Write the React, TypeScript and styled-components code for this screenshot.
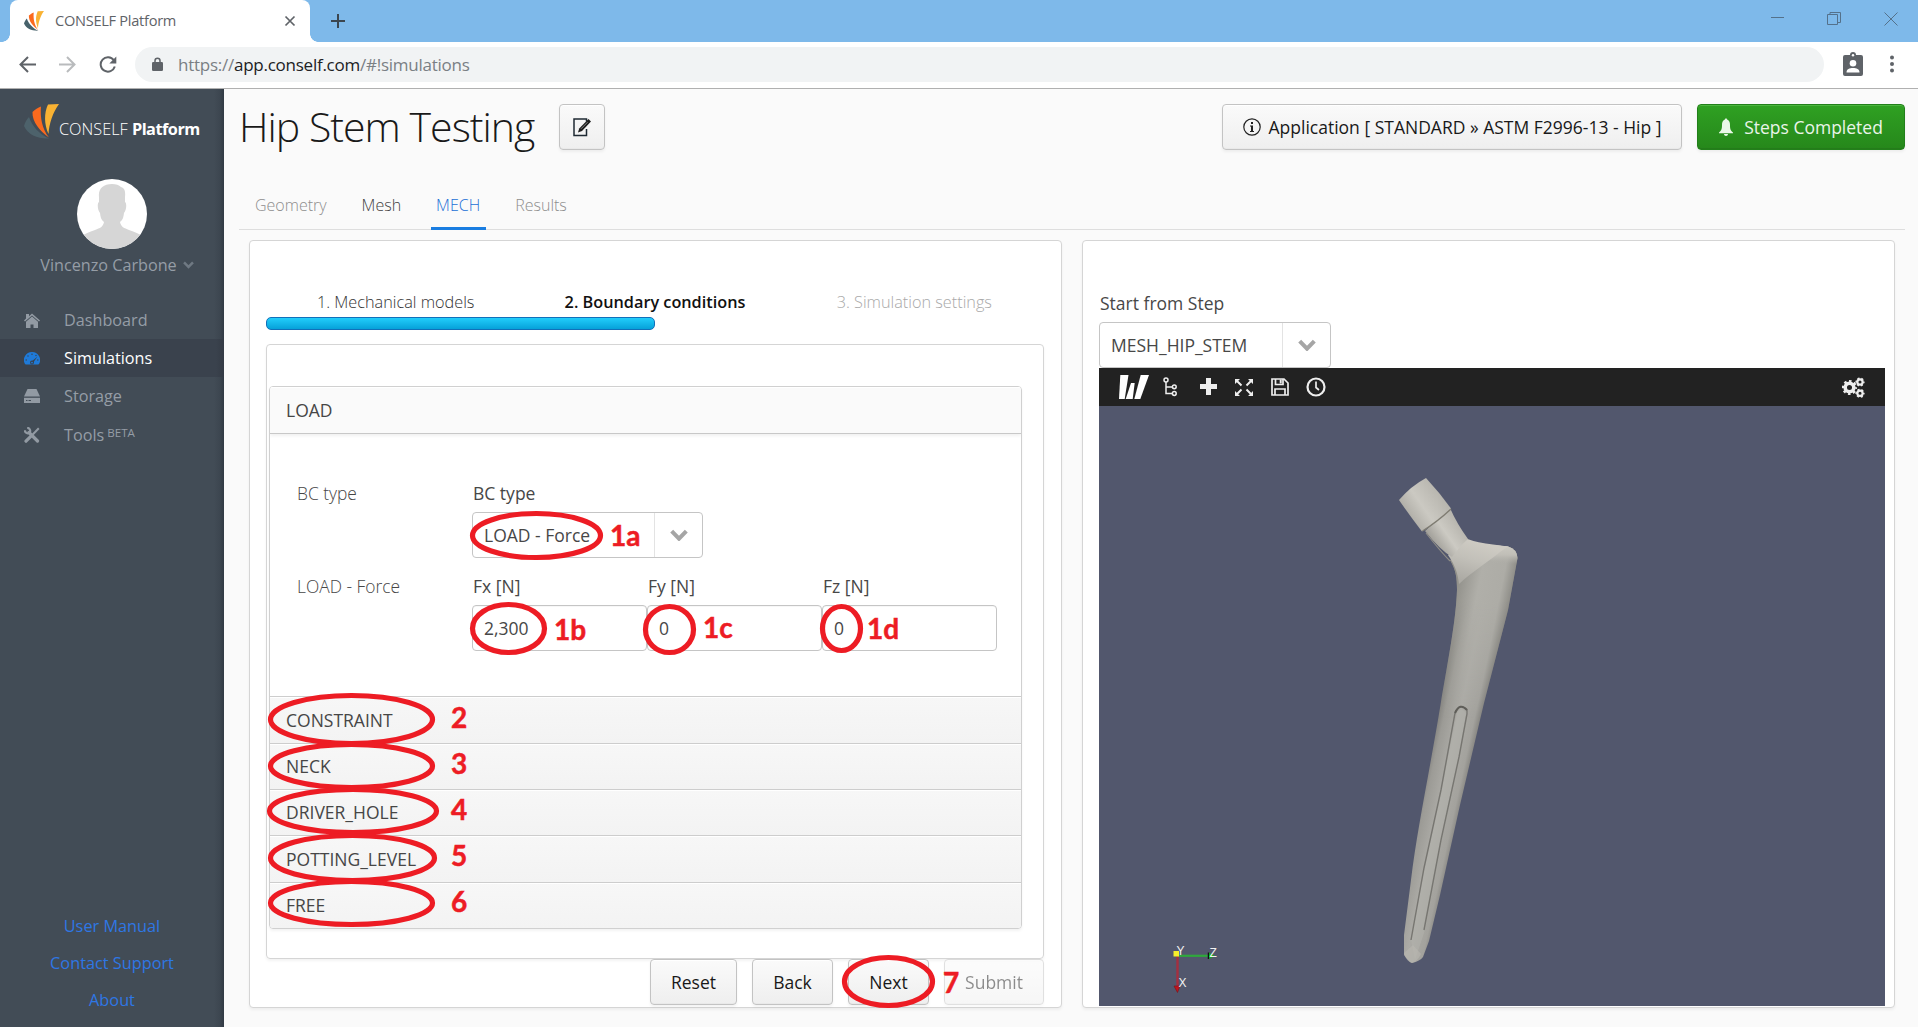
import React from "react";
import styled, { createGlobalStyle, css } from "styled-components";

const GlobalStyle = createGlobalStyle`
  * { box-sizing: border-box; }
  html, body { margin: 0; padding: 0; overflow: hidden; }
  body { font-family: "Open Sans", "Noto Sans", sans-serif; background: #fafafa; color: #474747; }
  svg { display: block; flex: none; }
`;

const Window = styled.div`
  position: relative;
  width: 1918px;
  height: 1027px;
  display: flex;
  flex-direction: column;
  overflow: hidden;
`;

/* ---------- browser frame ---------- */

const TabStrip = styled.div`
  height: 42px;
  flex: none;
  display: flex;
  background: #7eb9ea;
  padding-left: 10px;
`;

const BrowserTab = styled.div`
  position: relative;
  width: 300px;
  background: #fff;
  border-radius: 8px 8px 0 0;
  display: flex;
  align-items: center;
  padding: 0 14px 0 14px;
  font-size: 14.6px;
  letter-spacing: -0.28px;
  color: #5f6368;
  &::before, &::after {
    content: "";
    position: absolute;
    bottom: 0;
    width: 8px;
    height: 8px;
  }
  &::before { left: -8px; background: radial-gradient(circle at 0 0, transparent 7.5px, #fff 8px); }
  &::after { right: -8px; background: radial-gradient(circle at 100% 0, transparent 7.5px, #fff 8px); }
`;

const TabTitle = styled.span`
  flex: 1;
  margin-left: 11px;
  line-height: 20px;
  margin-top: -2px;
`;

const NewTab = styled.div`
  margin: 13px 0 0 20px;
`;

const WindowControls = styled.div`
  margin-left: auto;
  display: flex;
  align-items: flex-start;
  gap: 43px;
  padding: 12px 20px 0 0;
`;

const AddressRow = styled.div`
  height: 47px;
  flex: none;
  display: flex;
  align-items: center;
  background: #fff;
  border-bottom: 1px solid #b0b0b0;
  padding: 0 20px 5px 19px;
`;

const NavIcons = styled.div`
  display: flex;
  gap: 23px;
  width: 116px;
  margin-top: 3px;
`;

const AddressBar = styled.div`
  flex: 1;
  height: 35px;
  border-radius: 18px;
  background: #f1f3f4;
  display: flex;
  align-items: center;
  padding-left: 17px;
  margin-top: 3px;
  font-size: 17px;
  letter-spacing: -0.25px;
  color: #7a7f84;
`;

const Url = styled.span`
  margin-left: 15px;
  b { font-weight: 400; color: #202124; }
`;

const ChromeActions = styled.div`
  display: flex;
  align-items: center;
  gap: 23px;
  margin: 3px 0 0 19px;
`;

/* ---------- sidebar ---------- */

const Page = styled.div`
  flex: 1;
  display: flex;
  min-height: 0;
`;

const Sidebar = styled.aside`
  width: 224px;
  flex: none;
  display: flex;
  flex-direction: column;
  background: linear-gradient(to left, rgba(44, 52, 62, 0.75), rgba(44, 52, 62, 0.25) 4px, transparent 10px), #424c56;
  color: #959da6;
  font-size: 16.2px;
`;

const Brand = styled.div`
  height: 50px;
  margin-top: 15px;
  padding-left: 24px;
  display: flex;
  color: #fff;
`;

const BrandText = styled.div`
  margin-top: 13px;
  font-size: 16.3px;
  line-height: 24px;
  font-weight: 300;
  white-space: nowrap;
  b { font-weight: 700; letter-spacing: -0.5px; }
`;

const User = styled.div`
  margin-top: 25px;
  display: flex;
  flex-direction: column;
  align-items: center;
`;

const Avatar = styled.div`
  width: 70px;
  height: 70px;
  border-radius: 50%;
  overflow: hidden;
  background: #fff;
`;

const UserName = styled.div`
  display: flex;
  align-items: center;
  gap: 6px;
  margin: 4px 0 0 10px;
  line-height: 24px;
`;

const Menu = styled.nav`
  margin-top: 24px;
`;

const MenuItem = styled.div<{ $active?: boolean }>`
  height: 38px;
  display: flex;
  align-items: center;
  padding-left: 24px;
  gap: 24px;
  color: ${p => (p.$active ? "#fff" : "#959da6")};
  background: ${p => (p.$active ? "linear-gradient(to left, #343b45, #3a424d 8px)" : "none")};
  svg { color: ${p => (p.$active ? "#1f7ad8" : "#929aa3")}; }
  &:last-child { padding-top: 1px; }
  sup { font-size: 11.6px; line-height: 0; vertical-align: 4px; }
`;

const Links = styled.div`
  margin-top: auto;
  padding-bottom: 8px;
  display: flex;
  flex-direction: column;
  align-items: center;
`;

const FooterLink = styled.a`
  line-height: 37px;
  font-size: 16.3px;
  color: #2e77e5;
`;

/* ---------- content ---------- */

const Content = styled.main`
  flex: 1;
  display: flex;
  flex-direction: column;
  padding: 15px 13px 0 15px;
`;

const TitleRow = styled.header`
  height: 46px;
  display: flex;
  align-items: center;
`;

const Title = styled.h1`
  margin: 0 24px 0 0;
  width: 296px;
  font-size: 41px;
  line-height: 44px;
  padding-bottom: 2px;
  font-weight: 300;
  letter-spacing: -0.97px;
  white-space: nowrap;
  color: #191919;
`;

const Button = styled.button<{ $width?: number; $tone?: "green"; $faded?: boolean }>`
  height: 46px;
  width: ${p => (p.$width ? `${p.$width}px` : "auto")};
  flex: none;
  padding: 0;
  display: flex;
  align-items: center;
  justify-content: center;
  border: 1px solid #c3c3c3;
  border-radius: 4px;
  font: 400 17.5px "Open Sans", sans-serif;
  white-space: nowrap;
  color: #191919;
  background: linear-gradient(#fafafa 2%, #efefef 98%);
  box-shadow: inset 0 1px 0 #fff, inset 0 -1px 0 #e9e9e9, 0 2px 3px rgba(0, 0, 0, 0.05);
  ${p => p.$tone === "green" && css`
    color: #eaf4e9;
    border-color: #22801a;
    background: linear-gradient(#2fa022 2%, #26881b 98%);
    box-shadow: inset 0 1px 0 #4cb53f, inset 0 -1px 0 #247c1a, 0 2px 3px rgba(0, 0, 0, 0.05);
  `}
  ${p => p.$faded && css`opacity: 0.5;`}
`;

const ButtonIcon = styled.span<{ $gap: number }>`
  margin-right: ${p => p.$gap}px;
`;

const HeaderActions = styled.div`
  margin-left: auto;
  display: flex;
  gap: 15px;
`;

const Tabs = styled.div`
  height: 80px;
  border-bottom: 1px solid #dedede;
  display: flex;
  align-items: flex-end;
  padding-left: 10.5px;
  gap: 24px;
`;

const TabItem = styled.div<{ $state?: "active" | "muted" }>`
  height: 42px;
  margin-bottom: -1px;
  padding: 0 5.5px;
  font-size: 16px;
  line-height: 35px;
  font-weight: 300;
  color: ${p => (p.$state === "active" ? "#1a6fd6" : p.$state === "muted" ? "#8d8d8d" : "#3f3f3f")};
  border-bottom: 3px solid ${p => (p.$state === "active" ? "#197de1" : "transparent")};
`;

const Panels = styled.div`
  display: flex;
  gap: 20px;
  padding: 10px 10px 0 10px;
`;

const Panel = styled.section<{ $width: number }>`
  width: ${p => p.$width}px;
  height: 768px;
  flex: none;
  background: #fff;
  border: 1px solid #d5d5d5;
  border-radius: 4px;
  box-shadow: 0 2px 3px rgba(0, 0, 0, 0.05);
  padding: 0 17px 0 16px;
`;

const Steps = styled.div`
  margin-top: 49px;
  display: grid;
  grid-template-columns: repeat(3, 1fr);
  text-align: center;
  font-size: 16.25px;
  line-height: 24px;
`;

const Step = styled.span<{ $state: "done" | "current" | "next" }>`
  font-weight: ${p => (p.$state === "current" ? 600 : 300)};
  color: ${p => ({ done: "#333", current: "#111", next: "#a9a9a9" })[p.$state]};
`;

const Progress = styled.div`
  width: 389px;
  height: 13px;
  margin-top: 3px;
  border: 1px solid #1170ba;
  border-radius: 5px;
  background: linear-gradient(#22cdfb, #06a1d9);
`;

const Form = styled.div`
  margin-top: 14px;
  height: 615px;
  border: 1px solid #d5d5d5;
  border-radius: 4px;
  box-shadow: 0 2px 3px rgba(0, 0, 0, 0.05);
  padding: 41px 21px 0 2px;
`;

const Accordion = styled.div`
  height: 543px;
  border: 1px solid #d0d0d0;
  border-radius: 4px;
  box-shadow: 0 2px 3px rgba(0, 0, 0, 0.05);
  overflow: hidden;
`;

const AccordionHead = styled.div<{ $open?: boolean; $height: number }>`
  height: ${p => p.$height}px;
  padding: 0 0 1px 16px;
  display: flex;
  align-items: center;
  font-size: 17.5px;
  color: #464646;
  background: ${p => (p.$open ? "#fafafa" : "linear-gradient(#f7f7f7, #f3f3f3)")};
  ${p => p.$open
    ? css`border-bottom: 1px solid #c8c8c8; box-shadow: inset 0 1px 0 #fff, 0 2px 3px rgba(0, 0, 0, 0.06);`
    : css`border-top: 1px solid #cdcdcd; box-shadow: inset 0 1px 0 #fff;`}
`;

const AccordionBody = styled.div`
  height: 262px;
  padding: 47px 0 0 27px;
  display: flex;
  flex-direction: column;
  gap: 16px;
`;

const FormRow = styled.div`
  display: grid;
  grid-template-columns: 175px repeat(3, 175px);
`;

const RowLabel = styled.span`
  font-size: 17.4px;
  line-height: 24px;
  font-weight: 300;
  color: #464646;
`;

const Field = styled.div`
  display: flex;
  flex-direction: column;
`;

const Caption = styled.label`
  height: 24px;
  margin-bottom: 7px;
  font-size: 17.5px;
  line-height: 24px;
  padding-left: 1px;
`;

const Input = styled.div`
  height: 46px;
  border: 1px solid #c5c5c5;
  border-radius: 4px;
  background: #fff;
  box-shadow: inset 0 1px 0 #f7f7f7;
  padding-left: 11px;
  font-size: 17.5px;
  line-height: 44px;
`;

const Select = styled.div<{ $width: number; $arrow: number }>`
  width: ${p => p.$width}px;
  height: 46px;
  border: 1px solid #c5c5c5;
  border-radius: 4px;
  background: #fff;
  display: grid;
  grid-template-columns: 1fr ${p => p.$arrow}px;
  line-height: 44px;
  font-size: 17.5px;
  padding-left: 11px;
  span { white-space: nowrap; }
`;

const SelectArrow = styled.div`
  border-left: 1px solid #e3e3e3;
  display: flex;
  align-items: center;
  justify-content: center;
`;

const Actions = styled.div`
  display: flex;
  justify-content: flex-end;
  gap: 15px;
`;

const ViewerField = styled(Field)`
  padding-top: 50px;
`;

const ViewerBar = styled.div`
  width: 786px;
  height: 38px;
  background: #222;
  color: #eee;
  display: flex;
  align-items: center;
  padding: 0 20px 0 20px;
`;

const ViewerTools = styled.div`
  display: flex;
  align-items: center;
  flex: 1;
  gap: 17px;
  svg:nth-child(2) { margin-left: -3px; }
  svg:nth-child(3) { margin-left: 6px; }
`;

/* ---------- annotations laid over the page ---------- */

const Overlay = styled.svg`
  position: absolute;
  inset: 0;
`;

const Mark = styled.span<{ $x: number; $base: number }>`
  position: absolute;
  left: ${p => p.$x}px;
  top: ${p => p.$base - 28}px;
  font: 700 28px/34px Lato, sans-serif;
  -webkit-text-stroke: 0.5px #ed1c24;
  color: #ed1c24;
`;

const ellipses: [number, number, number, number][] = [
  [470, 511, 603, 560],
  [470, 602, 547, 655],
  [643, 604, 696, 655],
  [820, 604, 863, 653],
  [268, 693, 435, 746],
  [268, 742, 435, 790],
  [267, 787, 439, 835],
  [268, 833, 437, 883],
  [268, 879, 435, 927],
  [842, 955, 935, 1008],
];

const marks: [string, number, number][] = [
  ["1a", 610, 546],
  ["1b", 554, 640],
  ["1c", 703, 638],
  ["1d", 867, 639],
  ["2", 451, 728],
  ["3", 451, 774],
  ["4", 451, 820],
  ["5", 451, 866],
  ["6", 451, 912],
  ["7", 943, 993],
];

const LogoMark = ({ size, slate }: { size: number; slate: string }) => (
  <svg width={size} height={size} viewBox="0 0 35 35">
    <path d="M5 13 C8 22 15 30 25 34.500 C14 35 4 31 0 22 C1 18 3 15 5 13Z" fill={slate} />
    <path d="M17 2.500 C16 13 18 25 25 33.500 C16 27 8 18 8.500 8 C11 5.500 14 3.500 17 2.500Z" fill="#fb6a1e" />
    <path d="M24 0.500 L35 0 C29 8 25 20 24.500 30 C20 20 20 9 24 0.500Z" fill="#f9b233" />
  </svg>
);

const Chevron = ({ size, color, stroke }: { size: number; color: string; stroke: number }) => (
  <svg width={size} height={size * 0.7} viewBox="0 0 16 11">
    <path d="M1.500 1.800 L8 8.500 L14.500 1.800" fill="none" stroke={color} strokeWidth={stroke} />
  </svg>
);

const HomeIcon = () => (
  <svg width="16" height="16" viewBox="0 0 16 16" fill="currentColor">
    <path d="M2 2h3v2.200L8 1.500l8 7-1 1-7-6-7 6-1-1L2 6.500z" />
    <path d="M8 4.600l6 5.100V16H9.500v-3.500h-3V16H2V9.700z" />
  </svg>
);

const DashIcon = () => (
  <svg width="16" height="16" viewBox="0 0 16 16">
    <path d="M8 2a8 8 0 0 0-7 12l.8.600h12.400L15 14A8 8 0 0 0 8 2z" fill="currentColor" />
    <path d="M7 12l6.500-5.500L9 13z" fill="#3a424d" />
    <circle cx="8" cy="12.600" r="2" fill="#3a424d" />
    <circle cx="8" cy="12.600" r="0.900" fill="currentColor" />
    <g fill="#3a424d">
      <circle cx="8" cy="4.200" r="0.700" />
      <circle cx="4" cy="6" r="0.700" />
      <circle cx="2.200" cy="10" r="0.700" />
      <circle cx="12" cy="5.500" r="0.700" />
      <circle cx="13.800" cy="10" r="0.700" />
    </g>
  </svg>
);

const StorageIcon = () => (
  <svg width="16" height="16" viewBox="0 0 16 16" fill="currentColor">
    <path d="M3.500 1h9L16 8.500H0z" />
    <path d="M0 9.800h16V15H0z" />
    <path d="M2 12h1.500v1H2zM4.500 12h2.500v1H4.500z" fill="#424c56" />
  </svg>
);

const ToolsIcon = () => (
  <svg width="16" height="16" viewBox="0 0 16 16" fill="none" stroke="currentColor">
    <path d="M5 5.500L13.500 14" strokeWidth="3.200" strokeLinecap="round" />
    <path d="M.9 3.200a3 3 0 0 0 4.600 2.600 3 3 0 0 0-2.300-4.900" strokeWidth="2.200" />
    <path d="M14.800 1.200L8.500 7.800" strokeWidth="2" />
    <path d="M6.800 9.300L2 14.200" strokeWidth="3.200" strokeLinecap="round" />
  </svg>
);

const Gear = ({ x, y, r, teeth }: { x: number; y: number; r: number; teeth: number }) => {
  const outer = r * 0.88;
  const step = (2 * Math.PI * outer) / (teeth * 2);
  return (
    <g fill="none" stroke="#eee">
      <circle cx={x} cy={y} r={r * 0.6} strokeWidth={r * 0.5} />
      <circle cx={x} cy={y} r={outer} strokeWidth={r * 0.34} strokeDasharray={`${step} ${step}`} strokeDashoffset={step / 2} />
    </g>
  );
};

const StemView = () => (
  <svg width="786" height="600" viewBox="1099 406 786 600">
    <defs>
      <linearGradient id="stem" gradientUnits="userSpaceOnUse" x1="1431" y1="745" x2="1477" y2="755">
        <stop offset="0" stopColor="#82817d" />
        <stop offset="0.140" stopColor="#9c9b96" />
        <stop offset="0.450" stopColor="#acaba6" />
        <stop offset="0.780" stopColor="#a3a29d" />
        <stop offset="1" stopColor="#73726e" />
      </linearGradient>
      <linearGradient id="upper" gradientUnits="userSpaceOnUse" x1="1452" y1="610" x2="1512" y2="622">
        <stop offset="0" stopColor="#92918b" />
        <stop offset="0.350" stopColor="#b0afa9" />
        <stop offset="0.720" stopColor="#adaca6" />
        <stop offset="1" stopColor="#7d7c77" />
      </linearGradient>
      <linearGradient id="blend" gradientUnits="userSpaceOnUse" x1="0" y1="600" x2="0" y2="720">
        <stop offset="0" stopColor="#fff" />
        <stop offset="1" stopColor="#000" />
      </linearGradient>
      <mask id="fade" maskUnits="userSpaceOnUse" x="1380" y="470" width="160" height="500">
        <rect x="1380" y="470" width="160" height="500" fill="url(#blend)" />
      </mask>
      <linearGradient id="head" gradientUnits="userSpaceOnUse" x1="1404" y1="517" x2="1443" y2="490">
        <stop offset="0" stopColor="#a9a7a0" />
        <stop offset="0.450" stopColor="#cbc9c2" />
        <stop offset="1" stopColor="#b4b2ab" />
      </linearGradient>
      <linearGradient id="neck" gradientUnits="userSpaceOnUse" x1="1437" y1="549" x2="1464" y2="530">
        <stop offset="0" stopColor="#9f9d97" />
        <stop offset="0.500" stopColor="#cccac3" />
        <stop offset="1" stopColor="#b7b5ae" />
      </linearGradient>
      <linearGradient id="shoulder" gradientUnits="userSpaceOnUse" x1="1474" y1="541" x2="1462" y2="580">
        <stop offset="0" stopColor="#cecbc3" />
        <stop offset="0.450" stopColor="#c2c0b9" />
        <stop offset="1" stopColor="#acaaa4" />
      </linearGradient>
      <linearGradient id="tip" gradientUnits="userSpaceOnUse" x1="0" y1="546" x2="0" y2="564">
        <stop offset="0" stopColor="#cbc9c1" />
        <stop offset="0.500" stopColor="#c0beb7" />
        <stop offset="1" stopColor="#aeada7" stopOpacity="0" />
      </linearGradient>
    </defs>
    <rect x="1099" y="406" width="786" height="600" fill="#52576d" />
    {[["url(#stem)", undefined], ["url(#upper)", "url(#fade)"]].map(([fill, mask]) => (
      <path
        key={fill}
        fill={fill}
        mask={mask}
        d="M1450 560 C1456 570 1457 578 1457 590 C1456 620 1449 655 1440.500 705 C1428 780 1417 830 1411 880 L1404 935 L1404 955 Q1409 962 1412 963 Q1420 961 1423 957 L1429 941 L1440 895 L1460 805 L1484 703 L1508 610 L1517.500 558 Q1517 549 1508 546.500 L1490 545 Z"
      />
    ))}
    <path d="M1490 545 L1508 546.500 Q1517 549 1517.500 558 L1516.500 564 L1494 564 L1488 556 Z" fill="url(#tip)" />
    <path d="M1448 555 L1466 538.500 Q1478 543 1493 544.500 L1508 546.500 L1500 552 C1488 562 1472 572 1459 584 C1458 574 1455 565 1448 555Z" fill="url(#shoulder)" />
    <path d="M1425 531 L1450 508 Q1457 524 1468 539 Q1460 546 1452 557 Q1440 550 1425 531Z" fill="url(#neck)" />
    <path d="M1426 533 Q1441 552 1450 561" stroke="#8f8d87" strokeWidth="1.200" fill="none" />
    <path d="M1399 500 Q1411 486 1426 478 Q1440 493 1451 508.500 Q1437 522 1422 531.500 Q1410 516 1399 500Z" fill="url(#head)" />
    <path d="M1422.500 531 Q1437 522 1451 509" stroke="#7f7c72" strokeWidth="1.400" fill="none" />
    <path d="M1457 713 Q1461 706 1466 713 L1459 757 L1440 850 L1425 930 L1415 960 L1411 940 L1424 870 L1441 790Z" fill="#b4b3ae" opacity="0.500" />
    <path d="M1411 940 L1424 868 L1441 790 L1455 713 Q1460 702 1467 710 L1467 714 L1459 757 L1441 840 L1424 930" fill="none" stroke="#6d6c67" strokeWidth="1.400" opacity="0.850" />
    <path d="M1455 713 Q1460 702 1467 710" fill="none" stroke="#5f5e59" strokeWidth="2" />
    <path d="M1404 953 L1413 945 L1421 954 Q1417 962 1412 963 Q1406 961 1404 953Z" fill="#b9b8b1" opacity="0.600" />
    <path d="M1177 955.800H1209" stroke="#2fa83c" strokeWidth="2.200" />
    <path d="M1208.500 952.500V959" stroke="#111" strokeWidth="1.500" />
    <path d="M1209 952.500L1215 956L1209 959Z" fill="#14ad22" />
    <path d="M1177.500 956V986" stroke="#a52f3f" strokeWidth="2.400" />
    <path d="M1174 986H1180L1177.500 992.500Z" fill="#c0141c" stroke="#7a1016" strokeWidth="0.600" />
    <rect x="1173.500" y="951" width="5.500" height="5.500" fill="#f6f02a" />
    <g fill="#f2f2f2" fontFamily="Liberation Sans, sans-serif" fontSize="12">
      <text x="1176.500" y="955">Y</text>
      <text x="1209.500" y="957">Z</text>
      <text x="1178.500" y="987">X</text>
    </g>
  </svg>
);

const menu = [
  { label: "Dashboard", icon: <HomeIcon /> },
  { label: "Simulations", icon: <DashIcon />, active: true },
  { label: "Storage", icon: <StorageIcon /> },
  { label: "Tools", icon: <ToolsIcon />, beta: true },
];

const sections: [string, number][] = [
  ["CONSTRAINT", 47],
  ["NECK", 46],
  ["DRIVER_HOLE", 46],
  ["POTTING_LEVEL", 47],
  ["FREE", 46],
];

const BrowserFrame = () => (
  <>
    <TabStrip>
      <BrowserTab>
        <LogoMark size={20} slate="#47626b" />
        <TabTitle>CONSELF Platform</TabTitle>
        <svg width="12" height="12" viewBox="0 0 12 12">
          <path d="M1.500 1.500l9 9M10.500 1.500l-9 9" stroke="#5f6368" strokeWidth="1.700" />
        </svg>
      </BrowserTab>
      <NewTab>
        <svg width="16" height="16" viewBox="0 0 16 16">
          <path d="M8 1v14M1 8h14" stroke="#3b4650" strokeWidth="2" />
        </svg>
      </NewTab>
      <WindowControls>
        <svg width="13" height="13" viewBox="0 0 13 13"><path d="M0 5.500h13" stroke="#54718b" /></svg>
        <svg width="14" height="14" viewBox="0 0 14 14">
          <path d="M.5 2.500h10v10H.5zM3 2.500V.5h10.500v10H11" fill="none" stroke="#54718b" />
        </svg>
        <svg width="14" height="14" viewBox="0 0 14 14"><path d="M.5.500l13 13M13.500.500l-13 13" stroke="#54718b" /></svg>
      </WindowControls>
    </TabStrip>
    <AddressRow>
      <NavIcons>
        <svg width="17" height="17" viewBox="0 0 17 17">
          <path d="M17 8.500H2M9 1L1.500 8.500L9 16" fill="none" stroke="#5f6368" strokeWidth="2" />
        </svg>
        <svg width="17" height="17" viewBox="0 0 17 17">
          <path d="M0 8.500H15M8 1l7.500 7.500L8 16" fill="none" stroke="#b9bbbd" strokeWidth="2" />
        </svg>
        <svg width="18" height="17" viewBox="0 0 18 17">
          <path d="M14.800 4.300A7.200 7.200 0 1 0 15.800 10.500" fill="none" stroke="#5f6368" strokeWidth="2" />
          <path d="M17.300.500V7.500H10.300Z" fill="#5f6368" />
        </svg>
      </NavIcons>
      <AddressBar>
        <svg width="11" height="14" viewBox="0 0 11 14">
          <path d="M3 6V3.700a2.500 2.500 0 0 1 5 0V6" fill="none" stroke="#5f6368" strokeWidth="1.500" />
          <rect y="5" width="11" height="9" rx="1.300" fill="#5f6368" />
        </svg>
        <Url>https://<b>app.conself.com</b>/#!simulations</Url>
      </AddressBar>
      <ChromeActions>
        <svg width="20" height="24" viewBox="0 0 20 24">
          <path d="M2 3h5a3 3 0 0 1 6 0h5a2 2 0 0 1 2 2v17a2 2 0 0 1-2 2H2a2 2 0 0 1-2-2V5a2 2 0 0 1 2-2z" fill="#5f6368" />
          <circle cx="10" cy="3.200" r="1.200" fill="#fff" />
          <circle cx="10" cy="11.300" r="3.300" fill="#fff" />
          <path d="M3.500 20.500c0-3.500 3-4.500 6.500-4.500s6.500 1 6.500 4.500z" fill="#fff" />
        </svg>
        <svg width="12" height="18" viewBox="0 0 12 18" fill="#5f6368">
          <circle cx="6" cy="2.500" r="2" />
          <circle cx="6" cy="9" r="2" />
          <circle cx="6" cy="15.500" r="2" />
        </svg>
      </ChromeActions>
    </AddressRow>
  </>
);

const SideNav = () => (
  <Sidebar>
    <Brand>
      <LogoMark size={35} slate="#4d626b" />
      <BrandText>CONSELF <b>Platform</b></BrandText>
    </Brand>
    <User>
      <Avatar>
        <svg width="70" height="70" viewBox="0 0 70 70">
          <path d="M35 5c4 0 7 1 9 3 4 1 4.500 5 4 10v5c2 1 1.500 8-1 11-.5 4-1 7-4 9 1 5 4 6 9 8 6 2 10 4 14 6v18H4V57c4-2 8-4 14-6 5-2 8-3 9-8-3-2-3.500-5-4-9-2.500-3-3-10-1-11v-5C21 10 26 5 35 5z" fill="#d6d6d6" />
        </svg>
      </Avatar>
      <UserName>
        Vincenzo Carbone
        <Chevron size={11} color="#6f7983" stroke={3.6} />
      </UserName>
    </User>
    <Menu>
      {menu.map(m => (
        <MenuItem key={m.label} $active={m.active}>
          {m.icon}
          <span>{m.label}{m.beta && <sup> BETA</sup>}</span>
        </MenuItem>
      ))}
    </Menu>
    <Links>
      <FooterLink>User Manual</FooterLink>
      <FooterLink>Contact Support</FooterLink>
      <FooterLink>About</FooterLink>
    </Links>
  </Sidebar>
);

const BoundaryPanel = () => (
  <Panel $width={813}>
    <Steps>
      <Step $state="done">1. Mechanical models</Step>
      <Step $state="current">2. Boundary conditions</Step>
      <Step $state="next">3. Simulation settings</Step>
    </Steps>
    <Progress />
    <Form>
      <Accordion>
        <AccordionHead $open $height={47}>LOAD</AccordionHead>
        <AccordionBody>
          <FormRow>
            <RowLabel>BC type</RowLabel>
            <Field>
              <Caption>BC type</Caption>
              <Select $width={231} $arrow={48}>
                <span>LOAD - Force</span>
                <SelectArrow><Chevron size={18} color="#a5a5a5" stroke={3.6} /></SelectArrow>
              </Select>
            </Field>
          </FormRow>
          <FormRow>
            <RowLabel>LOAD - Force</RowLabel>
            {[["Fx [N]", "2,300"], ["Fy [N]", "0"], ["Fz [N]", "0"]].map(([name, value]) => (
              <Field key={name}>
                <Caption>{name}</Caption>
                <Input>{value}</Input>
              </Field>
            ))}
          </FormRow>
        </AccordionBody>
        {sections.map(([name, height]) => (
          <AccordionHead key={name} $height={height}>{name}</AccordionHead>
        ))}
      </Accordion>
    </Form>
    <Actions>
      <Button $width={87}>Reset</Button>
      <Button $width={81}>Back</Button>
      <Button $width={81}>Next</Button>
      <Button $width={100} $faded>Submit</Button>
    </Actions>
  </Panel>
);

const ViewerPanel = () => (
  <Panel $width={813}>
    <ViewerField>
      <Caption>Start from Step</Caption>
      <Select $width={232} $arrow={48}>
        <span>MESH_HIP_STEM</span>
        <SelectArrow><Chevron size={18} color="#a5a5a5" stroke={3.6} /></SelectArrow>
      </Select>
    </ViewerField>
    <ViewerBar>
      <ViewerTools>
        <svg width="30" height="24" viewBox="0 0 30 24" fill="#fff">
          <path d="M1.300 0H9.500L5.700 24H0Z" />
          <path d="M12 8H15.700L13.700 24H6.700Z" />
          <path d="M21.700 0H30L21.300 24H15.300Z" />
        </svg>
        <svg width="14" height="20" viewBox="0 0 14 20" fill="none" stroke="#eee" strokeWidth="1.500">
          <circle cx="3" cy="3" r="2" />
          <path d="M3 5v11.500h6.500M3 10h6.500" />
          <circle cx="11.300" cy="9.800" r="1.900" />
          <circle cx="11.300" cy="16.500" r="1.900" />
        </svg>
        <svg width="17" height="18" viewBox="0 0 17 18" fill="#eee">
          <path d="M6 0h5v6h6v5h-6v6H6v-6H0V6h6z" />
        </svg>
        <svg width="20" height="19" viewBox="0 0 20 19" fill="#eee" stroke="#eee" strokeWidth="2">
          <path d="M1 1h5L1 6zM19 1h-5l5 5zM1 18h5L1 13zM19 18h-5l5-5z" stroke="none" />
          <path d="M2.500 2.500l5 5M17.500 2.500l-5 5M2.500 16.500l5-5M17.500 16.500l-5-5" />
        </svg>
        <svg width="18" height="18" viewBox="0 0 18 18" fill="none" stroke="#eee" strokeWidth="1.700">
          <path d="M1 1h12l4 4v12H1z" />
          <path d="M4.500 1v5.500H12V1M4 17v-6h10v6" />
          <path d="M9.700 1.500v4" strokeWidth="2" />
        </svg>
        <svg width="20" height="20" viewBox="0 0 20 20" fill="none" stroke="#eee">
          <circle cx="10" cy="10" r="8.500" strokeWidth="2.200" />
          <path d="M10 4.500V10.500L13 13" strokeWidth="1.700" />
        </svg>
      </ViewerTools>
      <svg width="23" height="21" viewBox="0 0 23 21">
        <Gear x={7.5} y={10.5} r={7.2} teeth={8} />
        <Gear x={18} y={5} r={4.4} teeth={6} />
        <Gear x={18} y={16.3} r={4.4} teeth={6} />
      </svg>
    </ViewerBar>
    <StemView />
  </Panel>
);

export default function App() {
  return (
    <Window>
      <GlobalStyle />
      <BrowserFrame />
      <Page>
        <SideNav />
        <Content>
          <TitleRow>
            <Title>Hip Stem Testing</Title>
            <Button $width={46}>
              <svg width="18" height="19" viewBox="0 0 18 19">
                <path d="M13.500 11V17.500H1V1H13.500V3.500" fill="none" stroke="#1f2a33" strokeWidth="1.500" />
                <path d="M15.500 1L18 3.500L9 13L5 14.500L6.200 10.500Z" fill="#1f1f1f" />
                <path d="M8 10.800L14.600 4.200" stroke="#999" strokeWidth="0.800" />
              </svg>
            </Button>
            <HeaderActions>
              <Button $width={460}>
                <ButtonIcon $gap={8}>
                  <svg width="18" height="18" viewBox="0 0 18 18">
                    <circle cx="9" cy="9" r="8.200" fill="none" stroke="#222" strokeWidth="1.200" />
                    <path d="M7 7.500h3V13h1v1H7v-1h1V8.500H7zM8 4h2v2H8z" fill="#222" />
                  </svg>
                </ButtonIcon>
                Application [ STANDARD » ASTM F2996-13 - Hip ]
              </Button>
              <Button $width={208} $tone="green">
                <ButtonIcon $gap={11}>
                  <svg width="14" height="18" viewBox="0 0 14 18" fill="#eaf8e8">
                    <path d="M7 0l1.200 1.500C10.500 2.500 11 4.500 11 7c0 4 .5 5.500 3 7.500v.700H0v-.700C2.500 12.500 3 11 3 7c0-2.500.5-4.500 2.800-5.500zM5 16h4c0 2.600-4 2.600-4 0z" />
                  </svg>
                </ButtonIcon>
                Steps Completed
              </Button>
            </HeaderActions>
          </TitleRow>
          <Tabs>
            <TabItem $state="muted">Geometry</TabItem>
            <TabItem>Mesh</TabItem>
            <TabItem $state="active">MECH</TabItem>
            <TabItem $state="muted">Results</TabItem>
          </Tabs>
          <Panels>
            <BoundaryPanel />
            <ViewerPanel />
          </Panels>
        </Content>
      </Page>
      <Overlay width="1918" height="1027" viewBox="0 0 1918 1027">
        {ellipses.map(([x1, y1, x2, y2]) => (
          <ellipse
            key={`${x1}-${y1}`}
            cx={(x1 + x2) / 2}
            cy={(y1 + y2) / 2}
            rx={(x2 - x1) / 2 - 2.5}
            ry={(y2 - y1) / 2 - 2.5}
            fill="none"
            stroke="#ed1c24"
            strokeWidth="5.200"
          />
        ))}
      </Overlay>
      {marks.map(([text, x, base]) => (
        <Mark key={text} $x={x} $base={base}>{text}</Mark>
      ))}
    </Window>
  );
}
